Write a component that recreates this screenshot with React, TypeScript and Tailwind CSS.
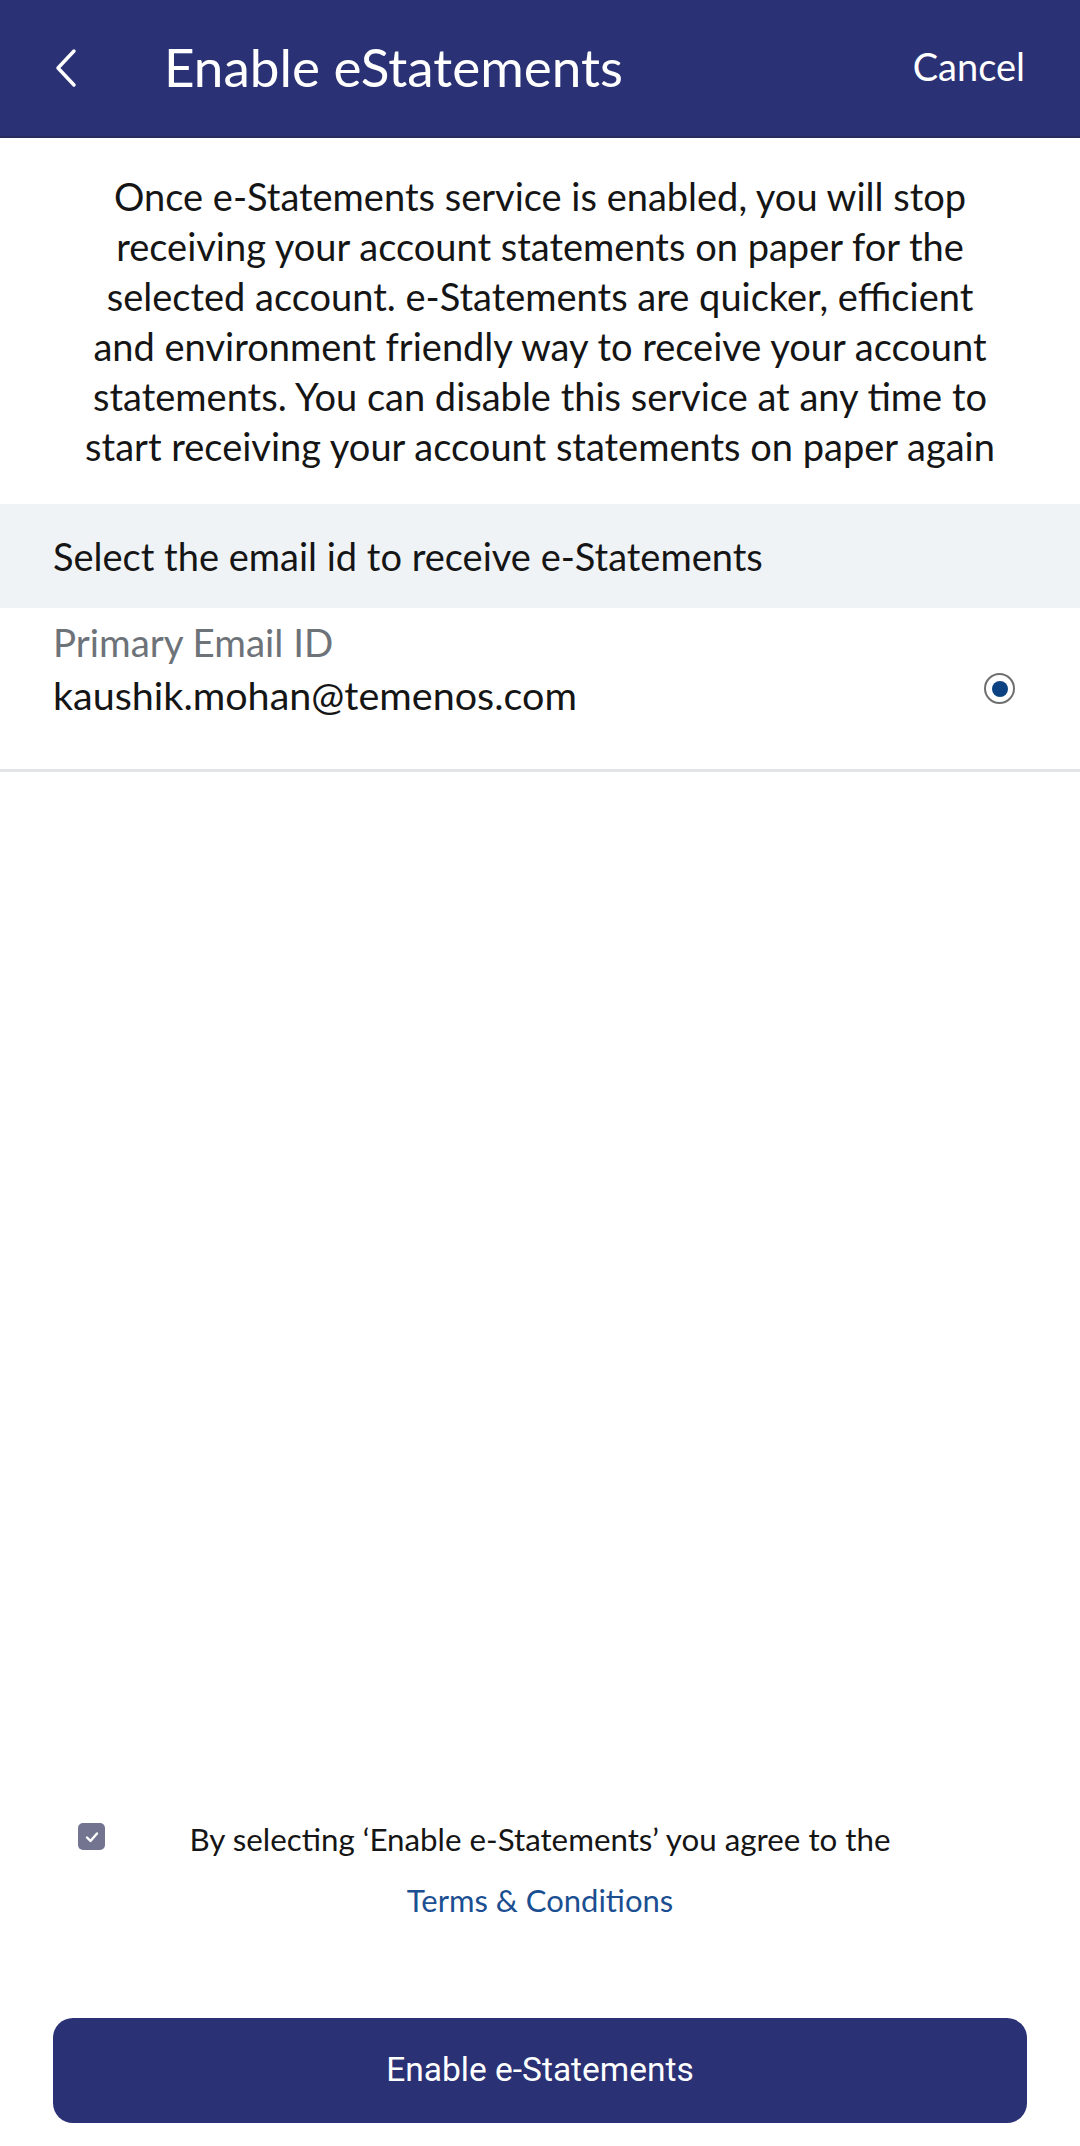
import React from 'react';

const font = { fontFamily: 'Lato, "Noto Sans", sans-serif' };

function BackIcon() {
  return (
    <svg width="28" height="40" viewBox="0 0 28 40" fill="none">
      <polyline points="22,3 6,20 22,37" stroke="white" strokeWidth="3.5" strokeLinecap="round" strokeLinejoin="round" />
    </svg>
  );
}

function Radio() {
  return (
    <div className="w-[31px] h-[31px] rounded-full border-[2.5px] border-[#6f6f6f] flex items-center justify-center">
      <div className="w-[16px] h-[16px] rounded-full bg-[#0d4282]" />
    </div>
  );
}

function Checkbox() {
  return (
    <div className="w-[27px] h-[27px] rounded-[5px] bg-[#73748f] flex items-center justify-center">
      <svg width="16" height="16" viewBox="0 0 16 16" fill="none">
        <polyline points="3,8.5 6.5,12 13,4.5" stroke="white" strokeWidth="2.4" strokeLinecap="round" strokeLinejoin="round" />
      </svg>
    </div>
  );
}

export default function App() {
  return (
    <div className="w-[1080px] h-[2146px] flex flex-col bg-white text-[#151515]" style={font}>
      <header className="h-[138px] shrink-0 bg-[#2a3175] flex items-center pl-[52px] pr-[55px] border-b-[2px] border-[#262c5e]">
        <BackIcon />
        <h1 className="ml-[84px] text-[53px] text-white flex-1 leading-none pb-[4px]">Enable eStatements</h1>
        <button className="text-[38px] text-white leading-none pb-[4px]">Cancel</button>
      </header>

      <section className="h-[366px] shrink-0 flex items-center justify-center text-center">
        <p className="text-[38px] leading-[50px]">
          Once e-Statements service is enabled, you will stop<br />
          receiving your account statements on paper for the<br />
          selected account. e-Statements are quicker, efficient<br />
          and environment friendly way to receive your account<br />
          statements. You can disable this service at any time to<br />
          start receiving your account statements on paper again
        </p>
      </section>

      <div className="h-[104px] shrink-0 bg-[#f0f3f6] flex items-center px-[53px]">
        <span className="text-[38px]">Select the email id to receive e-Statements</span>
      </div>

      <div className="h-[164px] shrink-0 flex items-start px-[53px] pt-[8px] border-b-[3px] border-[#e2e4e7]">
        <div className="flex-1 flex flex-col">
          <span className="text-[38.5px] leading-[52px] text-[#6d7378]">Primary Email ID</span>
          <span className="text-[39.5px] leading-[54px]">kaushik.mohan@temenos.com</span>
        </div>
        <div className="pt-[57px] pr-[12px]">
          <Radio />
        </div>
      </div>

      <div className="flex-1" />

      <div className="shrink-0 flex items-start px-[78px]">
        <div className="pt-[4px]">
          <Checkbox />
        </div>
        <div className="flex-1 flex flex-col items-center">
          <span className="text-[31.3px] leading-[40px]">By selecting ‘Enable e-Statements’ you agree to the</span>
          <span className="text-[31px] leading-[40px] mt-[21px] text-[#1b4f91]">Terms &amp; Conditions</span>
        </div>
        <div className="w-[27px]" />
      </div>

      <div className="shrink-0 px-[53px] pt-[98px] pb-[23px]">
        <button
          className="w-full h-[105px] rounded-[20px] bg-[#2a3175] text-white text-[33.5px]"
          style={{ fontFamily: 'Roboto, sans-serif' }}
        >
          Enable e-Statements
        </button>
      </div>
    </div>
  );
}
